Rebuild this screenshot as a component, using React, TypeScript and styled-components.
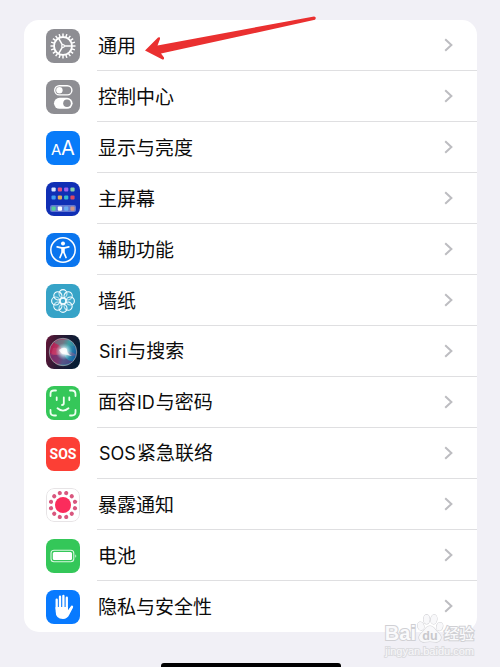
import React from "react";
import styled, { createGlobalStyle } from "styled-components";

const GlobalStyle = createGlobalStyle`
  body {
    margin: 0;
    background: #f1f0f6;
    font-family: "Noto Sans CJK SC", "Noto Sans", sans-serif;
    color: #0c0c0c;
  }
`;

const Page = styled.main`
  position: relative;
  box-sizing: border-box;
  min-height: 100vh;
  padding: 20px 23px 0 24px;
  display: flex;
  flex-direction: column;
  overflow: hidden;
`;

const Card = styled.ul`
  list-style: none;
  margin: 0;
  padding: 0;
  background: #fff;
  border-radius: 15px;
`;

const Row = styled.li`
  &:not(:last-child) [data-line] {
    border-bottom-color: #dfdfe1;
  }
`;

const RowLink = styled.a`
  display: flex;
  align-items: center;
  gap: 17px;
  padding-left: 22px;
  color: inherit;
  text-decoration: none;
`;

const RowBody = styled.span`
  flex: 1;
  box-sizing: border-box;
  height: 51px;
  padding: 0 24px 0 1px;
  display: flex;
  align-items: center;
  justify-content: space-between;
  border-bottom: 1px solid transparent;
`;

const Label = styled.span`
  font-size: 19px;
  line-height: 28px;
  white-space: nowrap;
`;

const Latin = styled.span`
  font-family: Inter, sans-serif;
  font-size: 18px;
  margin: 0 1px;
`;

const Tile = styled.svg`
  display: block;
  flex: none;
  width: 34px;
  height: 34px;
  border-radius: 8px;
`;

const Chevron = styled.svg`
  display: block;
  width: 9px;
  height: 14px;
  fill: none;
  stroke: #bdbdc1;
  stroke-width: 2;
`;

const HomeIndicator = styled.div`
  width: 180px;
  height: 4px;
  margin: auto auto 0;
  border-radius: 3px 3px 0 0;
  background: #000;
`;

const Arrow = styled.svg`
  position: absolute;
  left: 144px;
  top: 14px;
  width: 174px;
  height: 48px;
  pointer-events: none;
`;

const Watermark = styled.div`
  position: absolute;
  right: 26px;
  bottom: 9px;
  display: flex;
  flex-direction: column;
  align-items: flex-end;
  pointer-events: none;
`;

const Brand = styled.div`
  display: flex;
  align-items: flex-end;
  height: 32px;
  color: #fafafc;
  -webkit-text-stroke: 2px #d0d0d4;
  paint-order: stroke fill;
`;

const BrandLatin = styled.span`
  font: bold 20px/22px "Liberation Sans", sans-serif;
`;

const BrandChinese = styled.span`
  font-size: 15px;
  font-weight: 500;
  line-height: 22px;
`;

const Paw = styled.svg`
  width: 28px;
  height: 31px;
`;

const Site = styled.div`
  font: 11px/14px "Liberation Sans", sans-serif;
  color: #f8f8fa;
  -webkit-text-stroke: 2px #dcdce0;
  paint-order: stroke fill;
`;

const turns = (n: number) => Array.from({ length: n }, (_, i) => (i * 360) / n);

const GearIcon = () => (
  <Tile viewBox="0 0 34 34" aria-hidden="true">
    <rect width="34" height="34" fill="#8e8e93" />
    <g fill="none" stroke="#fff">
      <circle cx="17" cy="17" r="9" strokeWidth="1.9" />
      {turns(20).map((a) => (
        <path key={a} d="M17 7.6V4.5" strokeWidth="1.5" transform={`rotate(${a} 17 17)`} />
      ))}
      {[90, 210, 330].map((a) => (
        <path key={a} d="M17 16V8" strokeWidth="1.5" transform={`rotate(${a} 17 17)`} />
      ))}
    </g>
    <circle cx="17" cy="17" r="1.9" fill="#fff" />
    <circle cx="17" cy="17" r="0.8" fill="#8e8e93" />
  </Tile>
);

const ControlIcon = () => (
  <Tile viewBox="0 0 34 34" aria-hidden="true">
    <rect width="34" height="34" fill="#8e8e93" />
    <rect x="8.7" y="5.7" width="17.2" height="9.2" rx="4.6" fill="none" stroke="#fff" strokeWidth="1.4" />
    <circle cx="13.4" cy="10.3" r="3.2" fill="#fff" />
    <rect x="8" y="17.8" width="18.6" height="11" rx="5.5" fill="#fff" />
    <circle cx="21" cy="23.3" r="3.8" fill="#8e8e93" />
  </Tile>
);

const DisplayIcon = () => (
  <Tile viewBox="0 0 34 34" aria-hidden="true">
    <rect width="34" height="34" fill="#087bf9" />
    <g fill="#fff" fontFamily="Inter, sans-serif" fontWeight="400">
      <text x="5" y="24" fontSize="15">A</text>
      <text x="15" y="24" fontSize="20">A</text>
    </g>
  </Tile>
);

const appColors = [
  ["#dbe7ff", "#e34e7c", "#9b63ee", "#85cfad"],
  ["#3e9cf2", "#dfaa59", "#35b9d0", "#db4963"],
  ["#55cd9a", "#ffffff", "#69abf0", "#d19687"],
];

const HomeIcon = () => (
  <Tile viewBox="0 0 34 34" aria-hidden="true">
    <rect width="34" height="34" fill="#102fb5" />
    <rect x="4" y="23" width="26" height="7" rx="2" fill="#6478d2" />
    {appColors.map((line, y) =>
      line.map((c, x) => (
        <rect key={`${x}-${y}`} x={5.5 + x * 6.3} y={[5.4, 13.4, 24.5][y]} width="4.2" height="4.2" rx="1" fill={c} />
      ))
    )}
  </Tile>
);

const AccessibilityIcon = () => (
  <Tile viewBox="0 0 34 34" aria-hidden="true">
    <rect width="34" height="34" fill="#0a75ee" />
    <circle cx="17" cy="17" r="12.2" fill="none" stroke="#fff" strokeWidth="1.5" />
    <circle cx="17" cy="10.6" r="2" fill="#fff" />
    <path
      d="M11.2 13.8L15.4 14.8H18.6L22.8 13.8M16.3 15V19L14 24.5M17.7 15V19L20 24.5"
      fill="none" stroke="#fff" strokeWidth="1.7" strokeLinecap="round" strokeLinejoin="round"
    />
    <path d="M15.5 14.5h3v5h-3z" fill="#fff" />
  </Tile>
);

const WallpaperIcon = () => (
  <Tile viewBox="0 0 34 34" aria-hidden="true">
    <rect width="34" height="34" fill="#36a3c7" />
    <g fill="#5ab7d4" fillOpacity="0.3" stroke="#f4fcff" strokeWidth="1.1">
      {turns(8).map((a) => (
        <ellipse key={a} cx="17" cy="9.7" rx="4" ry="4.1" transform={`rotate(${a} 17 17)`} />
      ))}
      <circle cx="17" cy="17" r="2.8" />
    </g>
  </Tile>
);

const SiriIcon = () => (
  <Tile viewBox="0 0 34 34" aria-hidden="true">
    <defs>
      <linearGradient id="siri-back" x2="1" y2="0.2">
        <stop offset="0" stopColor="#641638" />
        <stop offset="0.48" stopColor="#261a33" />
        <stop offset="1" stopColor="#071d35" />
      </linearGradient>
      <linearGradient id="siri-orb" x1="0" y1="0.35" x2="1" y2="0.65">
        <stop offset="0" stopColor="#af174e" />
        <stop offset="0.4" stopColor="#b3486d" />
        <stop offset="0.6" stopColor="#419fae" />
        <stop offset="1" stopColor="#0e57a2" />
      </linearGradient>
      <radialGradient id="siri-glow">
        <stop offset="0" stopColor="#fff" />
        <stop offset="0.3" stopColor="#f1fcff" stopOpacity="0.9" />
        <stop offset="1" stopColor="#85d5e2" stopOpacity="0" />
      </radialGradient>
    </defs>
    <rect width="34" height="34" fill="url(#siri-back)" />
    <circle cx="17" cy="17" r="13.7" fill="url(#siri-orb)" stroke="#8d98a3" strokeWidth="0.9" />
    <path d="M8 8C13 2 24 4 28 11Q21 9 17 15Q13 9 8 8" fill="#409b97" opacity="0.55" />
    <path d="M4 18Q11 22 18 18Q20 27 27 26C17 34 5 28 4 18" fill="#5d2e72" opacity="0.65" />
    <path d="M7 13Q14 12 18 17Q11 21 5 20M18 17Q25 15 30 20Q23 23 18 17" fill="#e84b79" opacity="0.3" />
    <circle cx="18" cy="16.5" r="8.5" fill="url(#siri-glow)" />
    <path d="M13 15Q18 11 21 14Q20 18 26 21Q20 20 18 19Q15 19 13 15" fill="#fff" opacity="0.75" />
  </Tile>
);

const FaceIcon = () => (
  <Tile viewBox="0 0 34 34" aria-hidden="true">
    <rect width="34" height="34" fill="#35c759" />
    <g fill="none" stroke="#effff2" strokeWidth="1.8" strokeLinecap="round" strokeLinejoin="round">
      <path d="M4.5 10V8Q4.5 4.5 8 4.5H10M24 4.5H26Q29.5 4.5 29.5 8V10M4.5 24V26Q4.5 29.5 8 29.5H10M24 29.5H26Q29.5 29.5 29.5 26V24" />
      <path d="M10.7 11.5V14M23.3 11.5V14M17.8 11.5V17.3Q17.8 19 16 19M11.5 22.3Q17 27 22.5 22.3" />
    </g>
  </Tile>
);

const SosIcon = () => (
  <Tile viewBox="0 0 34 34" aria-hidden="true">
    <rect width="34" height="34" fill="#fc3f35" />
    <text x="17" y="22" textAnchor="middle" fontFamily="Roboto, sans-serif" fontWeight="700" fontSize="14" fill="#fff">SOS</text>
  </Tile>
);

const ExposureIcon = () => (
  <Tile viewBox="0 0 34 34" aria-hidden="true">
    <rect x="0.5" y="0.5" width="33" height="33" rx="7.5" fill="#fff" stroke="#e7e4e6" />
    <circle cx="17" cy="17" r="8" fill="#fb2c5c" />
    {turns(12).map((a) => (
      <circle key={a} cx="17" cy="4.6" r="2.1" fill="#d9577e" transform={`rotate(${a + 15} 17 17)`} />
    ))}
  </Tile>
);

const BatteryIcon = () => (
  <Tile viewBox="0 0 34 34" aria-hidden="true">
    <rect width="34" height="34" fill="#34c759" />
    <rect x="5" y="11.2" width="22.8" height="11.6" rx="3" fill="none" stroke="#d7f7df" strokeWidth="1.1" />
    <rect x="6.8" y="13" width="19.2" height="8" rx="1.5" fill="#fff" />
    <path d="M29.3 15.2Q31.2 17 29.3 18.8Z" fill="#d7f7df" />
  </Tile>
);

const HandIcon = () => (
  <Tile viewBox="0 0 34 34" aria-hidden="true">
    <rect width="34" height="34" fill="#087aff" />
    <path
      d="M10.7 19V9.7M14 18V6.7M17.4 18V6M20.8 19V7.7M22.5 22L26 16.7"
      fill="none" stroke="#fff" strokeWidth="2.3" strokeLinecap="round"
    />
    <path d="M9.6 17H22V20.5L25.7 15.8Q27.5 16 27 17.6L23.4 24.6Q21.4 29 17 29Q9.6 29 9.6 21Z" fill="#fff" />
  </Tile>
);

const rows: { icon: React.ReactNode; label: React.ReactNode }[] = [
  { icon: <GearIcon />, label: "通用" },
  { icon: <ControlIcon />, label: "控制中心" },
  { icon: <DisplayIcon />, label: "显示与亮度" },
  { icon: <HomeIcon />, label: "主屏幕" },
  { icon: <AccessibilityIcon />, label: "辅助功能" },
  { icon: <WallpaperIcon />, label: "墙纸" },
  { icon: <SiriIcon />, label: <><Latin>Siri</Latin>与搜索</> },
  { icon: <FaceIcon />, label: <>面容<Latin>ID</Latin>与密码</> },
  { icon: <SosIcon />, label: <><Latin>SOS</Latin>紧急联络</> },
  { icon: <ExposureIcon />, label: "暴露通知" },
  { icon: <BatteryIcon />, label: "电池" },
  { icon: <HandIcon />, label: "隐私与安全性" },
];

export default function App() {
  return (
    <Page>
      <GlobalStyle />
      <Card>
        {rows.map(({ icon, label }, i) => (
          <Row key={i}>
            <RowLink href="#">
              {icon}
              <RowBody data-line>
                <Label>{label}</Label>
                <Chevron viewBox="0 0 9 14" aria-hidden="true">
                  <path d="M1.2 1.2L7.4 7L1.2 12.8" />
                </Chevron>
              </RowBody>
            </RowLink>
          </Row>
        ))}
      </Card>
      <HomeIndicator />
      <Arrow viewBox="0 0 174 48" aria-hidden="true">
        <path
          d="M1 36.5L14 23.5Q16.5 22.5 16 25L13.5 31.5L170 2.5Q173 3 171 5.8L17 39.5L20 43.5Q20.5 46.5 17.5 45Z"
          fill="#ea3030"
        />
      </Arrow>
      <Watermark>
        <Brand>
          <BrandLatin>Bai</BrandLatin>
          <Paw viewBox="0 0 29 31" aria-hidden="true">
            <g fill="#f8f8fa" stroke="#d0d0d4" strokeWidth="1.2">
              <ellipse cx="5" cy="13" rx="3.2" ry="4.3" transform="rotate(-15 5 13)" />
              <ellipse cx="11" cy="6" rx="3.2" ry="4.8" />
              <ellipse cx="18.5" cy="6" rx="3.2" ry="4.8" transform="rotate(8 18.5 6)" />
              <ellipse cx="24.5" cy="13.5" rx="3.2" ry="4.3" transform="rotate(15 24.5 13.5)" />
              <path d="M14.5 13C19 13 20 18 24 21C28 25 25 30 20 29.5Q14.5 28.5 9 29.5C4 30 1 25 5 21C9 18 10 13 14.5 13Z" />
            </g>
            <text x="14.5" y="27" textAnchor="middle" fontFamily="Liberation Sans, sans-serif" fontWeight="700" fontSize="13" fill="#c8c8cc" style={{ WebkitTextStroke: "0" }}>du</text>
          </Paw>
          <BrandChinese>经验</BrandChinese>
        </Brand>
        <Site>jingyan.baidu.com</Site>
      </Watermark>
    </Page>
  );
}
